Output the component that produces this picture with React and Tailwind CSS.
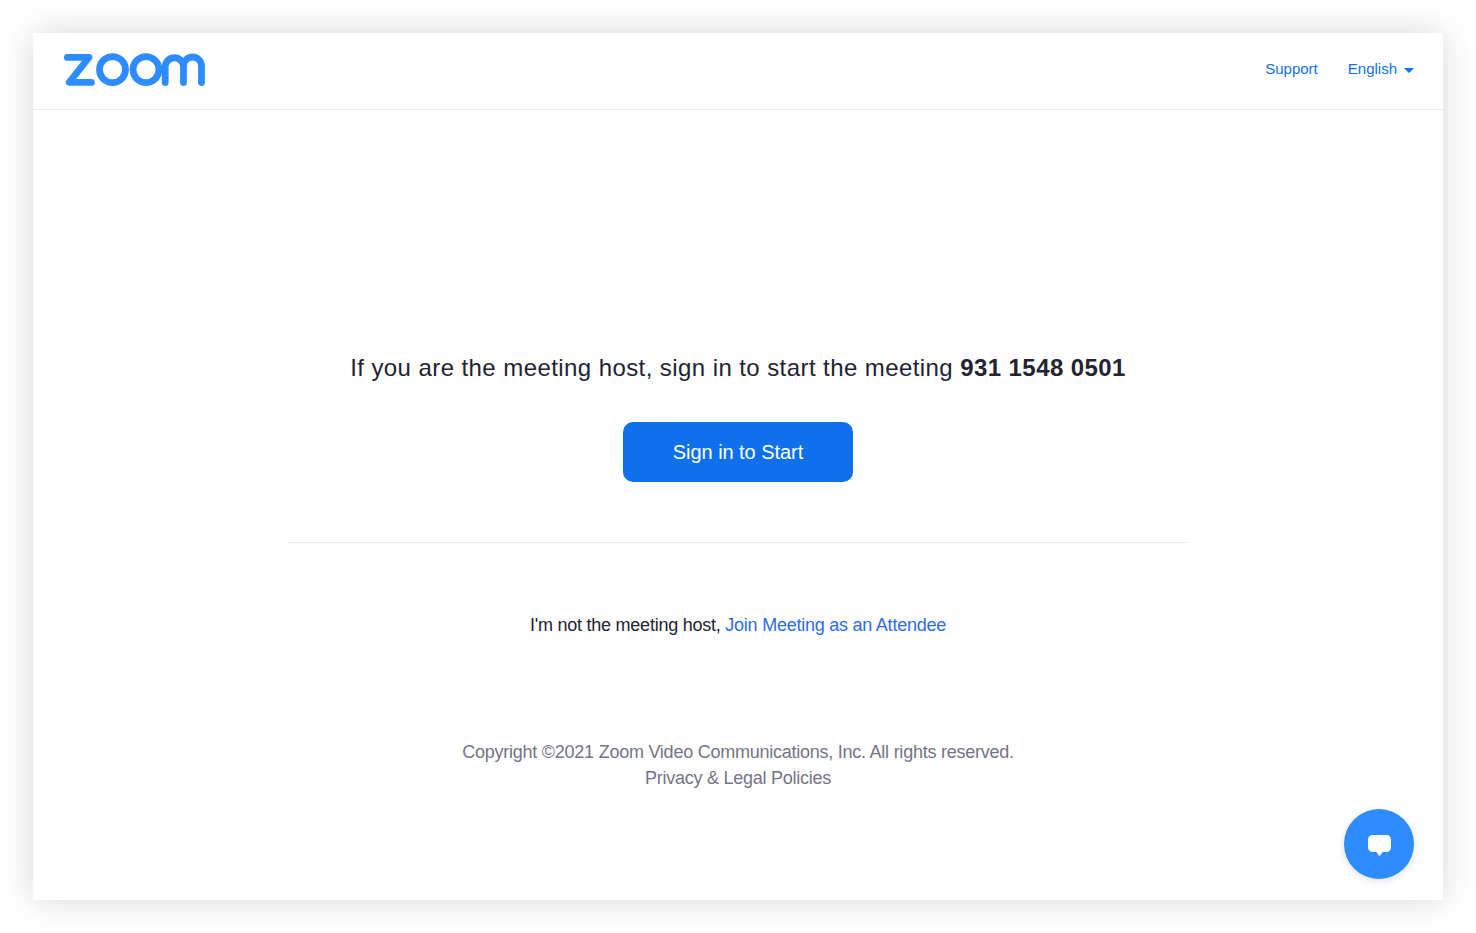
export default function App() {
  return (
    <div className="h-[933px] bg-white px-[33px] pt-[33px] pb-[33px] font-['Liberation_Sans',Arial,sans-serif]">
      <div className="relative flex h-[867px] flex-col bg-white shadow-[0_0_33px_rgba(0,0,0,0.16)]">
        <header className="flex h-[77px] items-center justify-between border-b border-[#e8e8ee] pb-[2px] pl-[30px] pr-[29px]">
          <svg width="142" height="34" viewBox="0 0 142 34" fill="none" stroke="#2d8cff" strokeWidth="6.8" strokeLinecap="round" strokeLinejoin="round">
            <path d="M4.4 4.4H26L6.2 29.4H28.4" />
            <circle cx="49.5" cy="16.6" r="13" />
            <circle cx="83" cy="16.6" r="13" />
            <path d="M102.2 29.6V13A9.2 9.2 0 0 1 120.5 13V29.6M120.5 13A9 9 0 0 1 138.5 13V29.6" />
          </svg>
          <nav className="mb-[2px] flex items-center gap-[30px] text-[15px] leading-5 text-[#0e71eb]">
            <a href="#">Support</a>
            <a href="#" className="flex items-center gap-[7px]">
              English
              <span className="mt-[2px] h-0 w-0 border-x-[5px] border-t-[5px] border-x-transparent border-t-[#0e71eb]" />
            </a>
          </nav>
        </header>
        <main className="flex flex-col items-center">
          <h1 className="mt-[243px] text-[24px] font-normal leading-[30px] tracking-[0.42px] text-[#232333]">
            If you are the meeting host, sign in to start the meeting <b className="font-bold">931 1548 0501</b>
          </h1>
          <button className="mt-[39px] h-[60px] w-[230px] rounded-[10px] bg-[#0e71eb] text-[20px] tracking-[-0.05px] text-white">
            Sign in to Start
          </button>
          <div className="mt-[60px] h-px w-[900px] bg-[#ededf4]" />
          <p className="mt-[70px] text-[18px] leading-6 tracking-[-0.24px] text-[#232333]">
            I'm not the meeting host, <a href="#" className="text-[#2d6cf0]">Join Meeting as an Attendee</a>
          </p>
          <footer className="mt-[102px] text-center text-[18px] leading-[26px] tracking-[-0.245px] text-[#747487]">
            <p>Copyright ©2021 Zoom Video Communications, Inc. All rights reserved.</p>
            <p>Privacy &amp; Legal Policies</p>
          </footer>
        </main>
        <button className="absolute bottom-[21px] right-[29px] flex h-[70px] w-[70px] items-center justify-center rounded-full bg-[#2d8cff] shadow-[0_2px_8px_rgba(0,0,0,0.12)]">
          <svg className="mt-[3px]" width="23" height="21" viewBox="0 0 23 21" fill="white">
            <path d="M4.5 0H18.5A4.5 4.5 0 0 1 23 4.5V12.5A4.5 4.5 0 0 1 18.5 17H14.5L12.2 20.4Q11.5 21 10.8 20.4L8.5 17H4.5A4.5 4.5 0 0 1 0 12.5V4.5A4.5 4.5 0 0 1 4.5 0Z" />
          </svg>
        </button>
      </div>
    </div>
  );
}
